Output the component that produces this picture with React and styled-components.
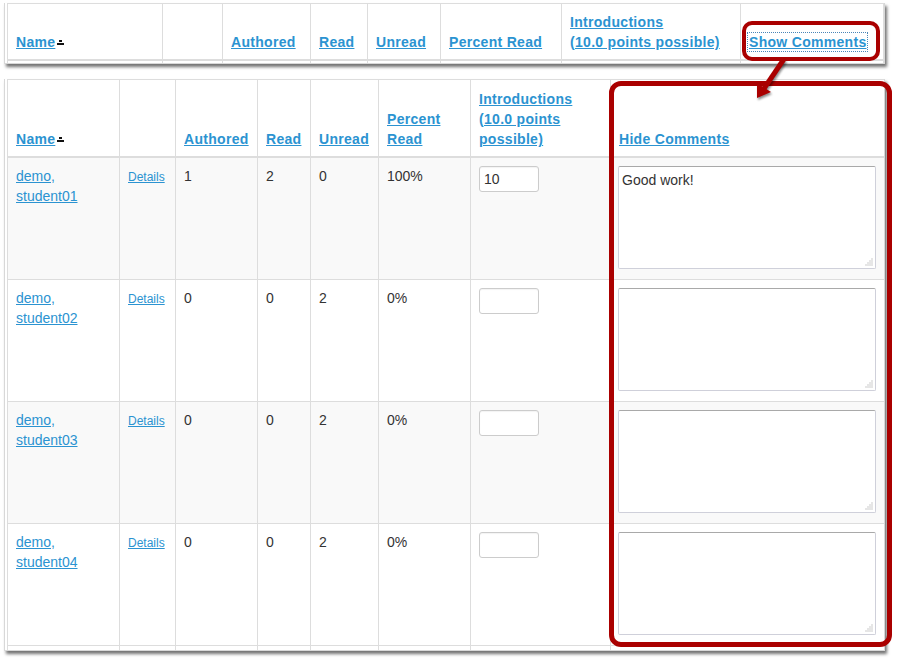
import React from 'react';
import styled, { createGlobalStyle } from 'styled-components';

const Global = createGlobalStyle`
  body {
    margin: 0;
    background: #fff;
    font-family: "Liberation Sans", Arial, sans-serif;
  }
`;

const Page = styled.div`
  position: relative;
  width: 899px;
  height: 661px;
  overflow: hidden;
  box-sizing: border-box;
  padding: 3px 0 0 4px;
  display: flex;
  flex-direction: column;
  gap: 15px;
`;

const Shot = styled.div`
  width: 881px;
  height: ${({ $h }) => $h}px;
  box-sizing: border-box;
  border: 1px solid #d8d8d8;
  border-top: none;
  padding-left: 2px;
  background: #fff;
  overflow: hidden;
  box-shadow: 2px 3px 3px rgba(0, 0, 0, 0.55);
  flex-shrink: 0;
`;

const Table = styled.table`
  width: ${({ $w }) => $w}px;
  border-collapse: collapse;
  table-layout: fixed;
  font-size: 14px;
  color: #333;
`;

const Th = styled.th`
  text-align: left;
  vertical-align: bottom;
  padding: ${({ $pt }) => $pt ?? 9}px 8px 7px;
  border: 1px solid #ddd;
  border-bottom: 2px solid #ddd;
  font-weight: bold;
  line-height: 20px;
  letter-spacing: 0.3px;
  background: #fff;
`;

const HeadLink = styled.a`
  color: #2b93d1;
  text-decoration: underline;
  outline: ${({ $focused }) => ($focused ? '1px dotted #4a86b8' : 'none')};
  outline-offset: 1px;
`;

const Row = styled.tr`
  background: ${({ $striped }) => ($striped ? '#f9f9f9' : '#fff')};
`;

const Td = styled.td`
  vertical-align: top;
  padding: 8px 8px 10px;
  border: 1px solid #ddd;
  line-height: 20px;
`;

const StubTd = styled.td`
  height: 8px;
  padding: 0;
  border: 1px solid #ddd;
`;

const NameLink = styled.a`
  color: #2b93d1;
  text-decoration: underline;
`;

const DetailsLink = styled.a`
  color: #2b93d1;
  font-size: 12px;
  text-decoration: underline;
`;

const SortIcon = styled.svg`
  display: inline-block;
  width: 9px;
  height: 8px;
  margin-left: 1px;
  vertical-align: -1px;
`;

const GradeInput = styled.input`
  display: block;
  width: 60px;
  height: 26px;
  box-sizing: border-box;
  border: 1px solid #ccc;
  border-radius: 3px;
  padding: 2px 4px;
  font: 14px "Liberation Sans", Arial, sans-serif;
  color: #333;
  background: #fff;
  box-shadow: inset 0 1px 1px rgba(0, 0, 0, 0.05);
`;

const CommentBox = styled.div`
  position: relative;
  margin-left: -1px;
`;

const CommentArea = styled.textarea`
  display: block;
  width: 100%;
  height: 103px;
  box-sizing: border-box;
  border: 1px solid #cfd0da;
  border-top-color: #a9a9a9;
  border-radius: 2px;
  padding: 3px 3px;
  resize: none;
  font: 14px/20px "Liberation Sans", Arial, sans-serif;
  color: #333;
  background: #fff;
`;

const Grip = styled.svg`
  position: absolute;
  right: 3px;
  bottom: 3px;
  width: 8px;
  height: 8px;
`;

const Callout = styled.div`
  position: absolute;
  left: ${({ $x }) => $x}px;
  top: ${({ $y }) => $y}px;
  width: ${({ $w }) => $w}px;
  height: ${({ $h }) => $h}px;
  box-sizing: border-box;
  border: ${({ $t }) => $t}px solid #aa0000;
  border-radius: ${({ $r }) => $r}px;
  pointer-events: none;
`;

const Arrow = styled.svg`
  position: absolute;
  left: 748px;
  top: 56px;
  width: 44px;
  height: 48px;
  overflow: visible;
  filter: drop-shadow(1px 2px 1px rgba(0, 0, 0, 0.45));
`;

const topCols = [155, 60, 88, 57, 73, 121, 179, 143];
const bottomCols = [112, 56, 82, 53, 68, 92, 140, 274];

const students = [
  { id: '01', authored: 1, read: 2, unread: 0, pct: '100%', grade: '10', comment: 'Good work!' },
  { id: '02', authored: 0, read: 0, unread: 2, pct: '0%', grade: '', comment: '' },
  { id: '03', authored: 0, read: 0, unread: 2, pct: '0%', grade: '', comment: '' },
  { id: '04', authored: 0, read: 0, unread: 2, pct: '0%', grade: '', comment: '' },
];

const Sort = () => (
  <SortIcon viewBox="0 0 9 8">
    <rect x="3" y="0" width="3" height="2" fill="#111" />
    <rect x="1" y="3" width="7" height="2" fill="#111" />
  </SortIcon>
);

const Cols = ({ widths }) => (
  <colgroup>
    {widths.map((w, i) => (
      <col key={i} style={{ width: w }} />
    ))}
  </colgroup>
);

const ResizeGrip = () => (
  <Grip viewBox="0 0 8 8">
    {[
      [7, 1],
      [5, 3], [7, 3],
      [3, 5], [5, 5], [7, 5],
      [1, 7], [3, 7], [5, 7], [7, 7],
    ].map(([x, y], i) => (
      <rect key={i} x={x - 0.5} y={y - 0.5} width="1" height="1" fill="#9a9a9a" />
    ))}
  </Grip>
);

const App = () => {
  return (
    <Page>
      <Global />
      <Shot $h={61}>
        <Table $w={876}>
          <Cols widths={topCols} />
          <thead>
            <tr>
              <Th $pt={8}><HeadLink>Name<Sort /></HeadLink></Th>
              <Th $pt={8} />
              <Th $pt={8}><HeadLink>Authored</HeadLink></Th>
              <Th $pt={8}><HeadLink>Read</HeadLink></Th>
              <Th $pt={8}><HeadLink>Unread</HeadLink></Th>
              <Th $pt={8}><HeadLink>Percent Read</HeadLink></Th>
              <Th $pt={8}><HeadLink>Introductions<br />(10.0 points possible)</HeadLink></Th>
              <Th $pt={8}><HeadLink $focused>Show Comments</HeadLink></Th>
            </tr>
          </thead>
          <tbody>
            <tr>
              {topCols.map((_, i) => <StubTd key={i} />)}
            </tr>
          </tbody>
        </Table>
      </Shot>

      <Shot $h={572}>
        <Table $w={877}>
          <Cols widths={bottomCols} />
          <thead>
            <tr>
              <Th><HeadLink>Name<Sort /></HeadLink></Th>
              <Th />
              <Th><HeadLink>Authored</HeadLink></Th>
              <Th><HeadLink>Read</HeadLink></Th>
              <Th><HeadLink>Unread</HeadLink></Th>
              <Th><HeadLink>Percent<br />Read</HeadLink></Th>
              <Th><HeadLink>Introductions<br />(10.0 points<br />possible)</HeadLink></Th>
              <Th><HeadLink>Hide Comments</HeadLink></Th>
            </tr>
          </thead>
          <tbody>
            {students.map((s, i) => (
              <Row key={s.id} $striped={i % 2 === 0}>
                <Td><NameLink>demo,<br />student{s.id}</NameLink></Td>
                <Td><DetailsLink>Details</DetailsLink></Td>
                <Td>{s.authored}</Td>
                <Td>{s.read}</Td>
                <Td>{s.unread}</Td>
                <Td>{s.pct}</Td>
                <Td><GradeInput defaultValue={s.grade} /></Td>
                <Td>
                  <CommentBox>
                    <CommentArea defaultValue={s.comment} />
                    <ResizeGrip />
                  </CommentBox>
                </Td>
              </Row>
            ))}
            <tr>
              {bottomCols.map((_, i) => <StubTd key={i} />)}
            </tr>
          </tbody>
        </Table>
      </Shot>

      <Callout $x={742} $y={21} $w={138} $h={40} $t={4} $r={10} />
      <Callout $x={609} $y={81} $w={283} $h={566} $t={5} $r={12} />
      <Arrow viewBox="0 0 44 48">
        <line x1="36" y1="3" x2="15" y2="34" stroke="#aa0000" strokeWidth="5" />
        <polygon points="9,42 9,27 23,36" fill="#aa0000" />
      </Arrow>
    </Page>
  );
};

export default App;
